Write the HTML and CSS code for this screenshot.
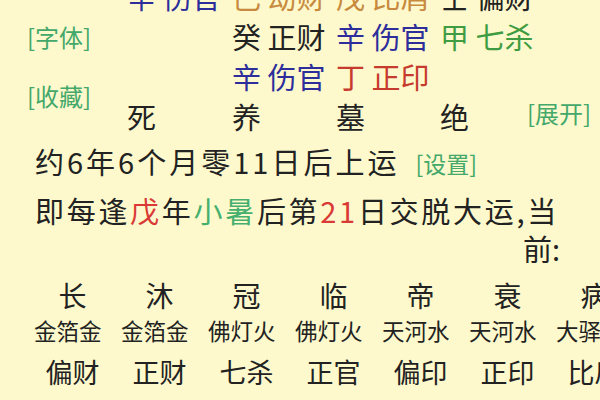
FILE: index.html
```html
<!DOCTYPE html>
<html lang="zh">
<head>
<meta charset="utf-8">
<link rel="stylesheet" href="styles.css">
</head>
<body>
<div class="head">
  <div class="side">
    <span class="link">[字体]</span>
    <span class="link">[收藏]</span>
  </div>
  <div class="pillars">
    <span><b class="blue">辛</b> <b class="blue">伤官</b></span>
    <span><b class="earth">己</b> <b class="earth">劫财</b></span>
    <span><b class="earth">戊</b> <b class="earth">比肩</b></span>
    <span><b>壬</b> <b>偏财</b></span>
    <span></span>

    <span></span>
    <span><b>癸</b> <b>正财</b></span>
    <span><b class="blue">辛</b> <b class="blue">伤官</b></span>
    <span><b class="green">甲</b> <b class="green">七杀</b></span>
    <span></span>

    <span></span>
    <span><b class="blue">辛</b> <b class="blue">伤官</b></span>
    <span><b class="red">丁</b> <b class="red">正印</b></span>
    <span></span>
    <span></span>

    <span>死</span>
    <span>养</span>
    <span>墓</span>
    <span>绝</span>
    <span class="link expand">[展开]</span>
  </div>
</div>

<div class="start">约6年6个月零11日后上运<span class="link setting">[设置]</span></div>
<div class="luck">即每逢<span class="red2">戊</span>年<span class="green2">小暑</span>后第<span class="red2">21</span>日交脱大运,当</div>
<div class="luck luck-end">前:</div>

<div class="table">
  <span class="stage">长</span>
  <span class="stage">沐</span>
  <span class="stage">冠</span>
  <span class="stage">临</span>
  <span class="stage">帝</span>
  <span class="stage">衰</span>
  <span class="stage">病</span>

  <span class="nayin">金箔金</span>
  <span class="nayin">金箔金</span>
  <span class="nayin">佛灯火</span>
  <span class="nayin">佛灯火</span>
  <span class="nayin">天河水</span>
  <span class="nayin">天河水</span>
  <span class="nayin">大驿土</span>

  <span class="god">偏财</span>
  <span class="god">正财</span>
  <span class="god">七杀</span>
  <span class="god">正官</span>
  <span class="god">偏印</span>
  <span class="god">正印</span>
  <span class="god">比肩</span>
</div>
</body>
</html>
```

FILE: styles.css
```css
html, body {
  margin: 0;
  padding: 0;
}

body {
  width: 600px;
  height: 400px;
  overflow: hidden;
  background: #fdf9cc;
  color: #222;
  font-family: "Noto Sans CJK SC", "Noto Sans", sans-serif;
}

b {
  font-weight: normal;
}

.link {
  color: #43a86a;
}

.head {
  display: flex;
  margin-top: -24px;
}

.side {
  width: 127px;
  flex: none;
  box-sizing: border-box;
  padding-left: 27px;
  padding-top: 49px;
  display: flex;
  flex-direction: column;
  gap: 35px;
  font-size: 24px;
  line-height: 24px;
}

.pillars {
  display: grid;
  grid-template-columns: 105px 104px 104px 87px auto;
  grid-auto-rows: 40px;
  font-size: 29px;
  line-height: 40px;
  white-space: nowrap;
}

.expand {
  font-size: 24px;
  line-height: 34px;
}

.blue { color: #2d2d9c; }
.earth { color: #c88a3e; }
.green { color: #3f9c43; }
.red { color: #c73a2e; }
.red2 { color: #d93a36; }
.green2 { color: #45b06e; }

.start {
  margin-top: 5px;
  padding-left: 35px;
  font-size: 29px;
  line-height: 40px;
  letter-spacing: 3px;
  white-space: nowrap;
}

.setting {
  font-size: 23px;
  letter-spacing: 0;
  margin-left: 16px;
  vertical-align: 1px;
}

.luck {
  padding-left: 35px;
  font-size: 29px;
  line-height: 38px;
  letter-spacing: 2.7px;
  white-space: nowrap;
}

.luck-end {
  text-align: right;
  padding-right: 40px;
  letter-spacing: 0;
}

.start + .luck {
  margin-top: 8px;
}

.table {
  margin-top: 10px;
  margin-left: 29px;
  display: grid;
  grid-template-columns: repeat(7, 87px);
  grid-template-rows: 36px 34px 50px;
  white-space: nowrap;
}

.stage {
  font-size: 28px;
  line-height: 36px;
  text-align: center;
}

.nayin {
  font-size: 22.5px;
  line-height: 34px;
  padding-left: 5px;
}

.god {
  font-size: 27px;
  line-height: 50px;
  text-align: center;
}
```
